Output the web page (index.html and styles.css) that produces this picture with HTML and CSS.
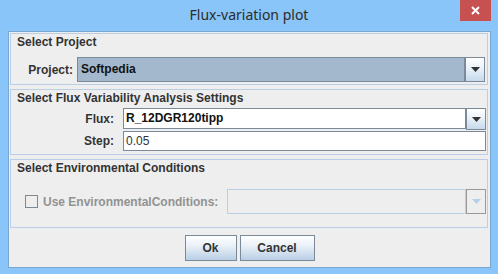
FILE: index.html
```html
<!DOCTYPE html>
<html lang="en">
<head>
	<meta charset="UTF-8">
	<title>Flux-variation plot</title>
	<link rel="stylesheet" href="styles.css">
</head>
<body>
	<div class="window">
		<div class="titlebar">
			<span class="title">Flux-variation plot</span>
			<span class="close">
				<svg width="9" height="9" viewBox="0 0 9 9"><path d="M1 1L8 8M8 1L1 8" stroke="#fff" stroke-width="2"/></svg>
			</span>
		</div>

		<div class="content">
			<div class="group">
				<h3>Select Project</h3>
				<div class="row row-project">
					<label>Project:</label>
					<div class="combo combo-big">
						<span class="field selected">Softpedia</span>
						<span class="arrow"><svg width="9" height="5" viewBox="0 0 9 5"><path d="M0 0H9L4.5 5Z" fill="#333"/></svg></span>
					</div>
				</div>
			</div>

			<div class="group group-flux">
				<h3>Select Flux Variability Analysis Settings</h3>
				<div class="row row-flux">
					<label>Flux:</label>
					<div class="combo combo-small">
						<span class="field">R_12DGR120tipp</span>
						<span class="arrow"><svg width="9" height="5" viewBox="0 0 9 5"><path d="M0 0H9L4.5 5Z" fill="#333"/></svg></span>
					</div>
				</div>
				<div class="row row-step">
					<label>Step:</label>
					<span class="textbox">0.05</span>
				</div>
			</div>

			<div class="group group-env">
				<h3>Select Environmental Conditions</h3>
				<div class="row row-env">
					<div class="check">
						<span class="box"></span>
						<span class="check-label">Use EnvironmentalConditions:</span>
					</div>
					<div class="combo combo-big disabled">
						<span class="field"></span>
						<span class="arrow"><svg width="9" height="5" viewBox="0 0 9 5"><path d="M0 0H9L4.5 5Z" fill="#b8cfe5"/></svg></span>
					</div>
				</div>
			</div>

			<div class="buttons">
				<button class="btn btn-ok">Ok</button>
				<button class="btn btn-cancel">Cancel</button>
			</div>
		</div>
	</div>
</body>
</html>
```

FILE: styles.css
```css
body{
	margin: 0;
	font-family: "Liberation Sans", Arial, sans-serif;
	font-size: 12px;
	color: #333;
}
.window{
	display: flex;
	flex-direction: column;
	width: 498px;
	height: 274px;
	background-color: #89c5f8;
}
.titlebar{
	position: relative;
	height: 31px;
	text-align: center;
}
.title{
	display: block;
	line-height: 30px;
	font-family: "Noto Sans", sans-serif;
	font-size: 14px;
	color: #2b2b2b;
}
.close{
	position: absolute;
	left: 460px;
	top: 0;
	width: 31px;
	height: 21px;
	display: flex;
	align-items: center;
	justify-content: center;
	background-color: #c75050;
}
.content{
	display: flex;
	flex-direction: column;
	margin-left: 8px;
	width: 481px;
	height: 234px;
	padding: 1px 0 0 0;
	border: 1px solid #7aa6d2;
	background-color: #eeeeee;
}
.group{
	margin: 0 2px 4px 1px;
	border: 1px solid #b8cfe5;
	height: 50px;
}
.group-flux{
	height: 64px;
}
.group-env{
	height: 67px;
	margin-bottom: 0;
}
.group h3{
	margin: 1px 0 0 0;
	padding-left: 6px;
	line-height: 15px;
	font-size: 12px;
	font-weight: bold;
}
.row{
	display: grid;
	align-items: center;
}
.row label{
	text-align: right;
	font-weight: bold;
}
.row-project{
	grid-template-columns: 62px 1fr;
	column-gap: 4px;
	margin: 7px 2px 0 0;
}
.row-flux, .row-step{
	grid-template-columns: 103px 1fr;
	column-gap: 9px;
	margin-right: 1px;
}
.row-flux{
	margin-top: 2px;
}
.row-step{
	margin-top: 2px;
}
.row-env{
	grid-template-columns: 202px 1fr;
	margin: 13px 1px 0 14px;
}
.combo{
	display: flex;
}
.combo .field{
	flex: 1;
	border: 1px solid #7a8a99;
	background: white;
	padding-left: 3px;
	font-weight: bold;
	color: #111;
}
.combo-big{
	height: 25px;
}
.combo-big .field{
	line-height: 23px;
}
.combo-small{
	height: 21px;
}
.combo-small .field{
	line-height: 19px;
	padding-left: 2px;
}
.combo .selected{
	background-color: #a3b8cc;
}
.combo .arrow{
	width: 18px;
	border: 1px solid #7a8a99;
	display: flex;
	align-items: center;
	justify-content: center;
	background: linear-gradient(#ffffff, #e9f1f9 45%, #c6d9ec);
}
.combo-small .arrow{
	height: 20px;
}
.combo.disabled .field{
	background-color: #eeeeee;
	border-color: #b8cfe5;
}
.combo.disabled .arrow{
	background: #eeeeee;
	border-color: #999;
}
.textbox{
	height: 18px;
	line-height: 18px;
	border: 1px solid #7a8a99;
	background: white;
	padding-left: 2px;
	color: #333;
}
.check{
	display: flex;
	align-items: center;
}
.check .box{
	width: 11px;
	height: 11px;
	border: 1px solid #7a8a99;
	margin-right: 5px;
}
.check-label{
	font-weight: bold;
	color: #929292;
}
.buttons{
	display: flex;
	justify-content: center;
	gap: 3px;
	margin-top: 7px;
}
.btn{
	height: 26px;
	padding: 0;
	border: 1px solid #7a8a99;
	background: linear-gradient(#ffffff, #eaf1f8 40%, #b8cfe5);
	font-family: "Liberation Sans", Arial, sans-serif;
	font-size: 12px;
	font-weight: bold;
	color: #333;
}
.btn-ok{
	width: 52px;
}
.btn-cancel{
	width: 75px;
}
```
